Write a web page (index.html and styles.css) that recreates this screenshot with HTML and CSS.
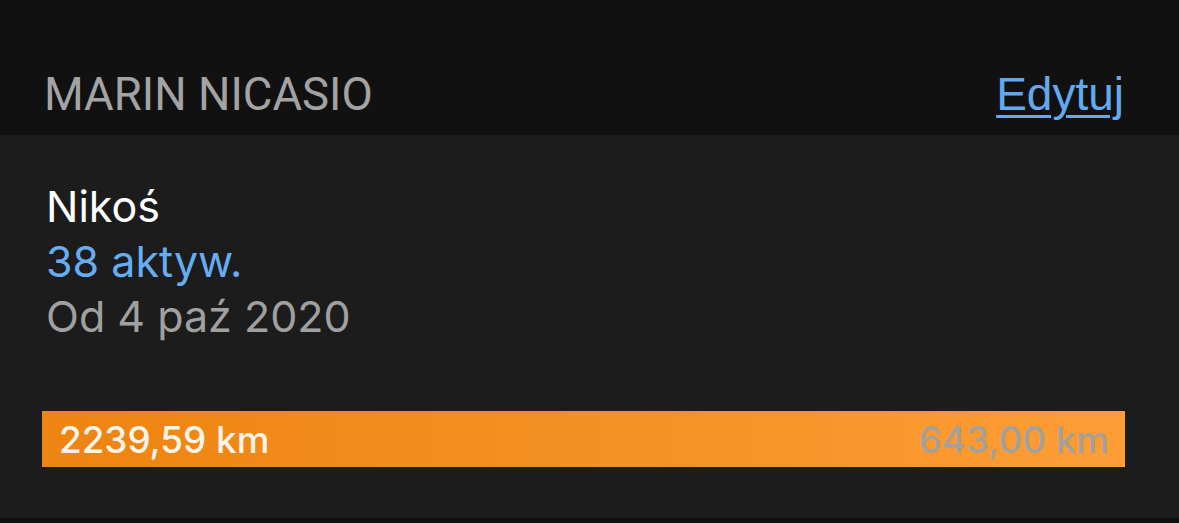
FILE: index.html
```html
<!DOCTYPE html>
<html lang="pl">
<head>
<meta charset="utf-8">
<link rel="stylesheet" href="styles.css">
</head>
<body>
<div class="page">
  <header class="section-head">
    <span class="section-title">MARIN NICASIO</span>
    <a class="edit-link" href="#">Edytuj</a>
  </header>
  <section class="card">
    <div class="info">
      <div class="name">Nikoś</div>
      <div class="count">38 aktyw.</div>
      <div class="since">Od 4 paź 2020</div>
    </div>
    <div class="bar">
      <span class="bar-done">2239,59 km</span>
      <span class="bar-left">643,00 km</span>
    </div>
  </section>
</div>
</body>
</html>
```

FILE: styles.css
```css
html, body {
  margin: 0;
  padding: 0;
  background: #111111;
}
.page {
  width: 1179px;
  height: 523px;
  background: #111111;
  font-family: Inter, "Noto Sans", sans-serif;
}
.section-head {
  height: 135px;
  box-sizing: border-box;
  display: flex;
  align-items: flex-end;
  justify-content: space-between;
  padding: 0 55px 18px 44px;
}
.section-title {
  font-family: Roboto, "Liberation Sans", sans-serif;
  font-size: 45.5px;
  color: #a3a3a3;
  line-height: 1;
}
.edit-link {
  font-family: "Liberation Sans", Arial, sans-serif;
  font-size: 46px;
  color: #62aaf0;
  text-decoration: underline;
  text-decoration-thickness: 3px;
  text-underline-offset: 5px;
  line-height: 1;
}
.card {
  height: 383px;
  background: #1c1c1c;
  box-sizing: border-box;
  padding: 44px 54px 0 42px;
  display: flex;
  flex-direction: column;
}
.info {
  padding-left: 4px;
  display: flex;
  flex-direction: column;
}
.name {
  font-size: 43px;
  color: #ffffff;
  line-height: 55px;
}
.count {
  font-size: 43px;
  color: #66adf2;
  line-height: 55px;
}
.since {
  font-size: 43px;
  color: #a0a0a0;
  line-height: 55px;
}
.bar {
  margin-top: 67px;
  height: 56px;
  background: linear-gradient(90deg, #ee8411 0%, #f59224 55%, #fe9d36 100%);
  display: flex;
  align-items: center;
  justify-content: space-between;
  padding: 0 16px 0 17px;
  font-size: 36.8px;
  font-weight: 500;
}
.bar-done {
  color: #fdf4ea;
}
.bar-left {
  color: #a4a09a;
}
```
